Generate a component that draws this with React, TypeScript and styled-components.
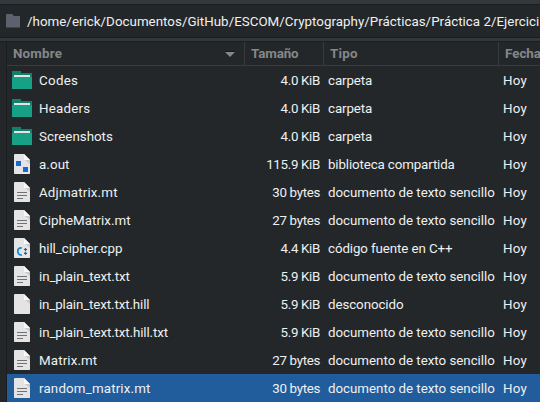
import React from 'react';
import styled, { createGlobalStyle } from 'styled-components';

const GlobalStyle = createGlobalStyle`
  * { box-sizing: border-box; }
  html, body { margin: 0; background: #232729; overflow: hidden; }
  body { font-family: Roboto, sans-serif; font-size: 13.33px; color: #eff0f1; }
`;

const Window = styled.main`
  width: 540px;
  height: 402px;
  overflow: hidden;
  display: flex;
  flex-direction: column;
  background: #232729;
`;

const TopEdge = styled.div`
  height: 5px;
  flex: none;
  background: #33393b;
  border-bottom: 1px solid #1b1e20;
`;

const PathBar = styled.div`
  height: 33px;
  flex: none;
  display: flex;
  align-items: center;
  padding-left: 6px;
  gap: 7px;
  border-bottom: 1px solid #191c1e;
`;

const PathText = styled.span`
  white-space: nowrap;
  letter-spacing: 0.03px;
  line-height: 30px;
  padding-top: 2px;
`;

const Divider = styled.div`
  height: 4px;
  flex: none;
  background: #33393b;
  border-bottom: 1px solid #1b1e20;
`;

const Body = styled.div`
  display: flex;
  flex: 1;
  min-height: 0;
`;

const Gutter = styled.div`
  width: 7px;
  flex: none;
  border-right: 1px solid #1b1e20;
`;

const List = styled.div`
  flex: 1;
  min-width: 0;
`;

const columns = '238px 79px 175px 80px';

const Header = styled.div`
  display: grid;
  grid-template-columns: ${columns};
  height: 24px;
  border-bottom: 1px solid #373c3f;
`;

const HeaderCell = styled.div<{ $tracking?: number }>`
  display: flex;
  align-items: center;
  justify-content: space-between;
  padding: 0 9px 0 6px;
  border-right: 1px solid #373c3f;
  color: #858789;
  font-weight: 700;
  line-height: 23px;
  letter-spacing: ${(p) => p.$tracking ?? 0.2}px;
  white-space: nowrap;
`;

const Row = styled.div<{ $selected?: boolean }>`
  display: grid;
  grid-template-columns: ${columns};
  height: 28px;
  line-height: 28px;
  background: ${(p) => (p.$selected ? '#215d9c' : 'transparent')};
`;

const Cell = styled.div<{ $align?: 'right'; $tracking?: number }>`
  padding: 1px 4px 0;
  text-align: ${(p) => p.$align ?? 'left'};
  white-space: nowrap;
  letter-spacing: ${(p) => p.$tracking ?? 0}px;
`;

const NameCell = styled.div`
  display: flex;
  align-items: center;
  height: 28px;
  padding-left: 5px;
  gap: 7px;
`;

const Name = styled.span<{ $tracking: number }>`
  align-self: flex-start;
  padding-top: 1px;
  white-space: nowrap;
  letter-spacing: ${(p) => p.$tracking}px;
`;

const Icon = styled.svg`
  display: block;
  flex: none;
`;

type Kind = 'folder' | 'binary' | 'text' | 'cpp' | 'blank';

function FileIcon({ kind }: { kind: Kind }) {
  if (kind === 'folder') {
    return (
      <Icon width="20" height="20" viewBox="0 0 20 20">
        <path d="M0 2V1h9v2h11v8H0z" fill="#12806a" />
        <path d="M2 5h16v3H2z" fill="#e4e4e4" />
        <path d="M0 7h20v12H0z" fill="#16a085" />
      </Icon>
    );
  }
  return (
    <Icon width="20" height="20" viewBox="0 0 20 20">
      <path d="M2.5 0H12l6 6v13.5l-.5.5h-15l-.5-.5V.5z" fill="#e4e4e4" />
      <path d="M13 6l5 4V6z" fill="#c9c9c9" />
      <path d="M12 0l6 6h-5.5l-.5-.5z" fill="#fafafa" />
      {kind === 'text' && <path d="M5 10.5h10M5 13.5h10M5 16.5h6" stroke="#727272" />}
      {kind === 'binary' && <path d="M4 7h5v5H4zM11 13h5v5h-5z" fill="#1967d2" />}
      {kind === 'cpp' && (
        <>
          <path d="M9.8 9.8C7.3 9.6 5.8 10.8 5.8 13.3s1.5 3.9 4 3.7" fill="none" stroke="#1687d0" strokeWidth="1.8" />
          <path d="M13.5 10v3M12 11.5h3M13.5 13.8v3M12 15.3h3" stroke="#1565a5" strokeWidth="1.2" />
        </>
      )}
    </Icon>
  );
}

const TEXT = 'documento de texto sencillo';

const typeTracking: Record<string, number> = {
  carpeta: -0.1,
  'biblioteca compartida': -0.13,
  [TEXT]: -0.02,
  'código fuente en C++': -0.1,
  desconocido: -0.08,
};

type FileEntry = {
  name: string;
  tracking: number;
  size: string;
  type: string;
  kind: Kind;
  selected?: boolean;
};

const files: FileEntry[] = [
  { name: 'Codes', tracking: 0.3, size: '4.0 KiB', type: 'carpeta', kind: 'folder' },
  { name: 'Headers', tracking: 0.2, size: '4.0 KiB', type: 'carpeta', kind: 'folder' },
  { name: 'Screenshots', tracking: 0, size: '4.0 KiB', type: 'carpeta', kind: 'folder' },
  { name: 'a.out', tracking: 0.1, size: '115.9 KiB', type: 'biblioteca compartida', kind: 'binary' },
  { name: 'Adjmatrix.mt', tracking: 0.17, size: '30 bytes', type: TEXT, kind: 'text' },
  { name: 'CipheMatrix.mt', tracking: 0.05, size: '27 bytes', type: TEXT, kind: 'text' },
  { name: 'hill_cipher.cpp', tracking: -0.07, size: '4.4 KiB', type: 'código fuente en C++', kind: 'cpp' },
  { name: 'in_plain_text.txt', tracking: -0.1, size: '5.9 KiB', type: TEXT, kind: 'text' },
  { name: 'in_plain_text.txt.hill', tracking: -0.12, size: '5.9 KiB', type: 'desconocido', kind: 'blank' },
  { name: 'in_plain_text.txt.hill.txt', tracking: -0.11, size: '5.9 KiB', type: TEXT, kind: 'text' },
  { name: 'Matrix.mt', tracking: 0.13, size: '27 bytes', type: TEXT, kind: 'text' },
  { name: 'random_matrix.mt', tracking: 0.17, size: '30 bytes', type: TEXT, kind: 'text', selected: true },
];

export default function App() {
  return (
    <Window>
      <GlobalStyle />
      <TopEdge />
      <PathBar>
        <Icon width="14" height="14" viewBox="0 0 14 14">
          <path d="M.5 0H6l2 2h5.5l.5.5v11H0V.5z" fill="#5d616e" />
        </Icon>
        <PathText>/home/erick/Documentos/GitHub/ESCOM/Cryptography/Prácticas/Práctica 2/Ejercici</PathText>
      </PathBar>
      <Divider />
      <Body>
        <Gutter />
        <List>
          <Header>
            <HeaderCell>
              Nombre
              <Icon width="10" height="6" viewBox="0 0 10 6">
                <path d="M0 0h10v1H0z" fill="#151719" />
                <path d="M0 1h10L5 6z" fill="#858789" />
              </Icon>
            </HeaderCell>
            <HeaderCell $tracking={-0.1}>Tamaño</HeaderCell>
            <HeaderCell>Tipo</HeaderCell>
            <HeaderCell $tracking={0}>Fecha</HeaderCell>
          </Header>
          {files.map((f) => (
            <Row key={f.name} $selected={f.selected}>
              <NameCell>
                <FileIcon kind={f.kind} />
                <Name $tracking={f.tracking}>{f.name}</Name>
              </NameCell>
              <Cell $align="right" $tracking={-0.32}>{f.size}</Cell>
              <Cell $tracking={typeTracking[f.type]}>{f.type}</Cell>
              <Cell $tracking={0.2}>Hoy</Cell>
            </Row>
          ))}
        </List>
      </Body>
    </Window>
  );
}
